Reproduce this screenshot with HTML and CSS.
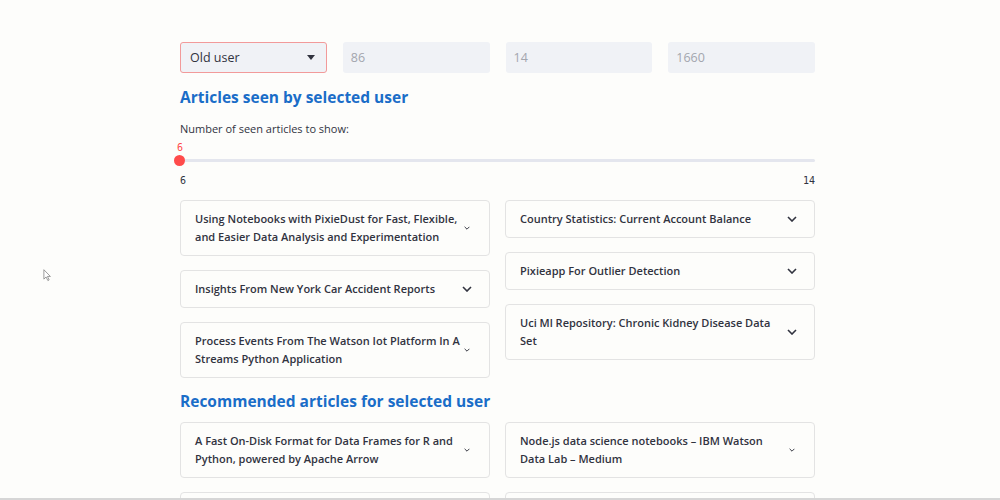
FILE: index.html
```html
<!DOCTYPE html>
<html>
<head>
<meta charset="utf-8">
<link rel="stylesheet" href="styles.css">
</head>
<body>
<main class="page">
  <div class="inputs">
    <div class="select"><span>Old user</span><span class="caret"></span></div>
    <div class="field">86</div>
    <div class="field">14</div>
    <div class="field">1660</div>
  </div>

  <h2 class="heading h-first">Articles seen by selected user</h2>

  <div class="slider">
    <div class="slider-label">Number of seen articles to show:</div>
    <div class="slider-value">6</div>
    <div class="track"><span class="thumb"></span></div>
    <div class="ticks"><span>6</span><span>14</span></div>
  </div>

  <div class="cols first-cols">
    <div class="col">
      <div class="card"><span class="title">Using Notebooks with PixieDust for Fast, Flexible, and Easier Data Analysis and Experimentation</span><svg class="chev small" viewBox="0 0 10 6"><path d="M1 1l4 4 4-4"/></svg></div>
      <div class="card"><span class="title">Insights From New York Car Accident Reports</span><svg class="chev" viewBox="0 0 10 6"><path d="M1 1l4 4 4-4"/></svg></div>
      <div class="card"><span class="title">Process Events From The Watson Iot Platform In A Streams Python Application</span><svg class="chev small" viewBox="0 0 10 6"><path d="M1 1l4 4 4-4"/></svg></div>
    </div>
    <div class="col">
      <div class="card"><span class="title">Country Statistics: Current Account Balance</span><svg class="chev" viewBox="0 0 10 6"><path d="M1 1l4 4 4-4"/></svg></div>
      <div class="card"><span class="title">Pixieapp For Outlier Detection</span><svg class="chev" viewBox="0 0 10 6"><path d="M1 1l4 4 4-4"/></svg></div>
      <div class="card"><span class="title">Uci Ml Repository: Chronic Kidney Disease Data Set</span><svg class="chev" viewBox="0 0 10 6"><path d="M1 1l4 4 4-4"/></svg></div>
    </div>
  </div>

  <h2 class="heading h-second">Recommended articles for selected user</h2>

  <div class="cols second-cols">
    <div class="col">
      <div class="card"><span class="title">A Fast On-Disk Format for Data Frames for R and Python, powered by Apache Arrow</span><svg class="chev small" viewBox="0 0 10 6"><path d="M1 1l4 4 4-4"/></svg></div>
      <div class="card"><span class="title">&nbsp;</span></div>
    </div>
    <div class="col">
      <div class="card"><span class="title">Node.js data science notebooks – IBM Watson Data Lab – Medium</span><svg class="chev small" viewBox="0 0 10 6"><path d="M1 1l4 4 4-4"/></svg></div>
      <div class="card"><span class="title">&nbsp;</span></div>
    </div>
  </div>
</main>

<svg class="cursor" viewBox="0 0 12 18"><path d="M1 1v13l3-3 2.5 5 1.8-.9-2.4-4.8H10z"/></svg>
<div class="bottom-line"></div>
</body>
</html>
```

FILE: styles.css
```css
html, body {
  margin: 0;
  padding: 0;
  background: #fdfdfb;
  height: 500px;
  overflow: hidden;
}

body {
  font-family: "Open Sans", "Noto Sans", sans-serif;
  color: #31333f;
}

.page {
  width: 635px;
  margin-left: 180px;
  padding-top: 42px;
}

.inputs {
  display: grid;
  grid-template-columns: repeat(4, 1fr);
  column-gap: 16px;
}

.select, .field {
  box-sizing: border-box;
  height: 31px;
  border-radius: 3px;
  background: #f0f2f6;
  display: flex;
  align-items: center;
  font-size: 12.5px;
}

.select {
  border: 1px solid #f29a9a;
  padding: 0 10px 0 9px;
  justify-content: space-between;
  color: #31333f;
}

.caret {
  width: 0;
  height: 0;
  border-left: 4.5px solid transparent;
  border-right: 4.5px solid transparent;
  border-top: 5px solid #31333f;
  margin-right: 1px;
}

.field {
  padding-left: 8px;
  color: #a3a6ae;
}

.heading {
  margin: 0;
  font-size: 15.5px;
  font-weight: 700;
  color: #1a6dc8;
  line-height: 22px;
}

.h-first {
  margin-top: 13px;
}

.h-second {
  margin-top: 12px;
}

.slider {
  margin-top: 13px;
}

.slider-label {
  font-size: 11px;
  line-height: 16px;
}

.slider-value {
  margin-top: 5px;
  font-size: 10px;
  line-height: 12px;
  color: #ff4b4b;
  width: 10px;
  text-align: center;
  margin-left: -5px;
  font-family: "DejaVu Sans Mono", monospace;
}

.track {
  position: relative;
  margin-top: 5px;
  height: 3px;
  background: #e4e6ee;
  border-radius: 2px;
}

.thumb {
  position: absolute;
  left: -6px;
  top: -4px;
  width: 11px;
  height: 11px;
  border-radius: 50%;
  background: #ff4b4b;
}

.ticks {
  display: flex;
  justify-content: space-between;
  margin-top: 13px;
  font-family: "DejaVu Sans Mono", monospace;
  font-size: 10px;
  line-height: 12px;
  color: #31333f;
}

.cols {
  display: grid;
  grid-template-columns: 310px 310px;
  column-gap: 15px;
  align-items: start;
}

.first-cols {
  margin-top: 13px;
}

.second-cols {
  margin-top: 10px;
}

.col {
  display: flex;
  flex-direction: column;
  gap: 14px;
}

.card {
  box-sizing: border-box;
  border: 1px solid #e3e3e3;
  border-radius: 4px;
  padding: 9px 18px 9px 14px;
  display: flex;
  align-items: center;
  justify-content: space-between;
  background: #fdfdfb;
}

.title {
  font-size: 11px;
  font-weight: 600;
  line-height: 18px;
  color: #31333f;
  max-width: 272px;
}

.chev {
  width: 10px;
  height: 6px;
  flex: none;
  fill: none;
  stroke: #31333f;
  stroke-width: 1.6;
  margin-right: -1px;
}

.chev.small {
  width: 6px;
  height: 4px;
  margin-right: 1px;
}

.cursor {
  position: fixed;
  left: 43px;
  top: 269px;
  width: 9px;
  height: 13px;
  fill: #ffffff;
  stroke: #777;
  stroke-width: 1;
}

.bottom-line {
  position: fixed;
  left: 0;
  right: 0;
  bottom: 0;
  height: 2px;
  background: #d6d6d6;
}
```
